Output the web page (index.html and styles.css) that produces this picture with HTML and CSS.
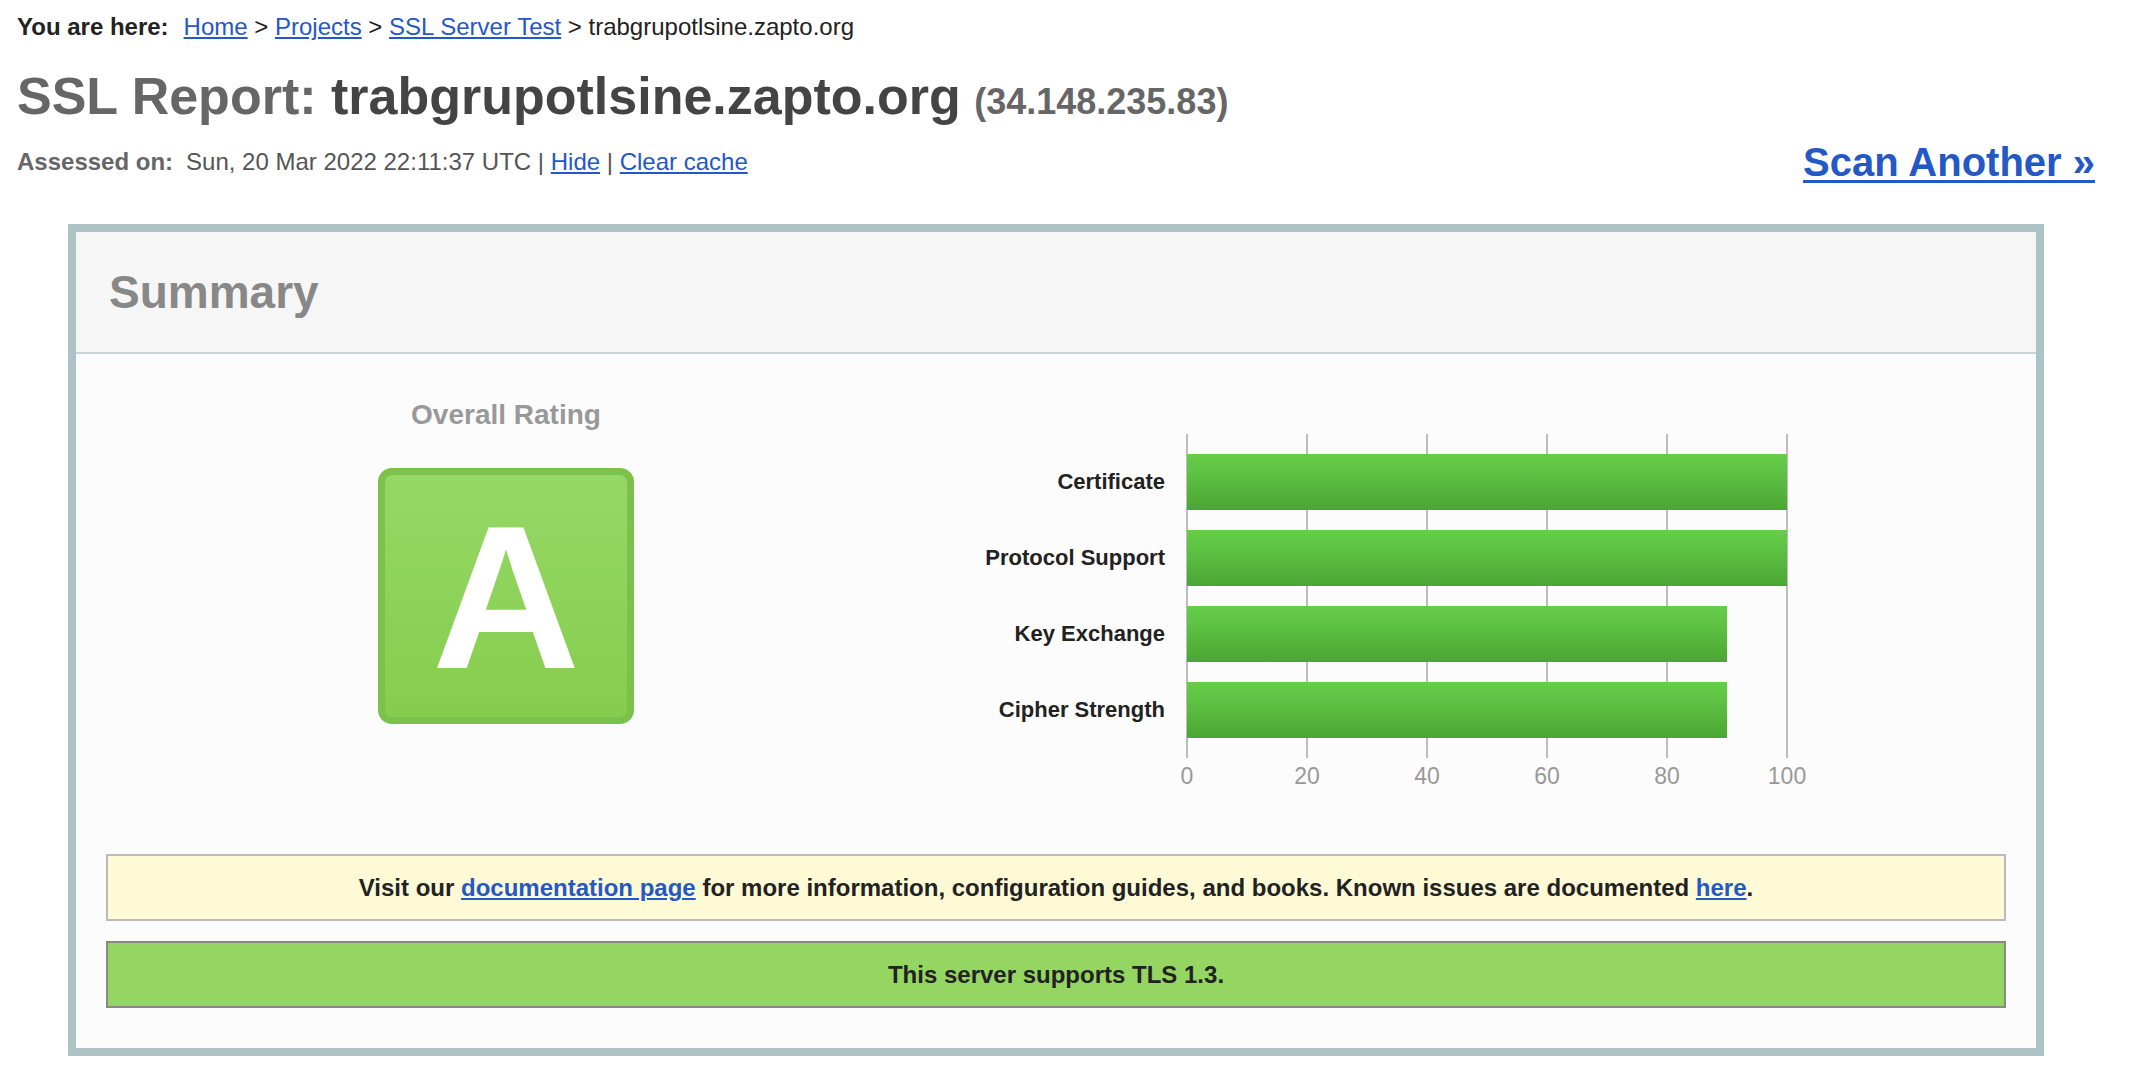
FILE: index.html
```html
<!DOCTYPE html>
<html lang="en">
<head>
<meta charset="utf-8">
<title>SSL Server Test: trabgrupotlsine.zapto.org</title>
<link rel="stylesheet" href="styles.css">
</head>
<body>
<div class="page">
  <div class="crumbs"><b class="here">You are here:</b><a href="#">Home</a> &gt; <a href="#">Projects</a> &gt; <a href="#">SSL Server Test</a> &gt; trabgrupotlsine.zapto.org</div>
  <h1 class="title"><span class="lead">SSL Report:</span> <span class="host">trabgrupotlsine.zapto.org</span> <span class="ip">(34.148.235.83)</span></h1>
  <div class="meta-row">
    <div class="assessed"><b class="assessed-label">Assessed on:</b>Sun, 20 Mar 2022 22:11:37 UTC | <a href="#">Hide</a> | <a href="#">Clear cache</a></div>
    <a class="scan" href="#">Scan Another &raquo;</a>
  </div>

  <div class="report">
    <div class="report-head">Summary</div>
    <div class="report-body">
      <div class="summary-row">
        <div class="rating">
          <div class="rating-title">Overall Rating</div>
          <div class="grade">A</div>
        </div>
        <div class="chart">
          <div class="labels">
            <div class="label">Certificate</div>
            <div class="label">Protocol Support</div>
            <div class="label">Key Exchange</div>
            <div class="label">Cipher Strength</div>
          </div>
          <div class="plot">
            <div class="bar" style="width: 600px"></div>
            <div class="bar" style="width: 600px"></div>
            <div class="bar" style="width: 540px"></div>
            <div class="bar" style="width: 540px"></div>
          </div>
          <div class="axis">
            <span>0</span><span>20</span><span>40</span><span>60</span><span>80</span><span>100</span>
          </div>
        </div>
      </div>
      <div class="notice">Visit our <a href="#">documentation page</a> for more information, configuration guides, and books. Known issues are documented <a href="#">here</a>.</div>
      <div class="good">This server supports TLS 1.3.</div>
    </div>
  </div>
</div>
</body>
</html>
```

FILE: styles.css
```css
html, body {
  margin: 0;
  padding: 0;
  background: #ffffff;
}

body {
  font-family: "Liberation Sans", Arial, Helvetica, sans-serif;
  color: #222222;
}

a {
  color: #2458c6;
  text-decoration: underline;
}

.page {
  padding: 13px 47px 0 17px;
}

.crumbs {
  font-size: 24px;
  line-height: 28px;
  color: #222222;
}

.here {
  margin-right: 15px;
}

.title {
  margin: 25px 0 0 0;
  font-size: 52px;
  line-height: 60px;
  font-weight: bold;
  white-space: nowrap;
}

.lead {
  color: #666666;
}

.host {
  color: #444444;
}

.ip {
  font-size: 36px;
  color: #666666;
  margin-left: -1px;
}

.meta-row {
  margin-top: 8px;
  display: flex;
  justify-content: space-between;
  align-items: flex-start;
}

.assessed {
  margin-top: 8px;
  font-size: 24px;
  line-height: 28px;
  color: #555555;
}

.assessed-label {
  color: #666666;
  margin-right: 13px;
}

.scan {
  font-size: 40px;
  line-height: 44px;
  font-weight: bold;
  color: #2458c6;
  text-decoration-thickness: 3px;
  text-underline-offset: 4px;
}

.report {
  margin: 40px 51px 0 51px;
  border: 8px solid #adc3c6;
  background: #fcfcfc;
}

.report-head {
  height: 120px;
  display: flex;
  align-items: center;
  padding-left: 33px;
  background: #f6f6f6;
  border-bottom: 2px solid #c8d6d6;
  font-size: 46px;
  line-height: 1;
  font-weight: bold;
  color: #888888;
}

.report-body {
  padding: 0 30px 40px 30px;
}

.summary-row {
  display: flex;
  align-items: flex-start;
}

.rating {
  width: 800px;
  padding-top: 45px;
  display: flex;
  flex-direction: column;
  align-items: center;
}

.rating-title {
  font-size: 28px;
  line-height: 32px;
  font-weight: bold;
  color: #999999;
}

.grade {
  margin-top: 37px;
  width: 242px;
  height: 242px;
  border: 7px solid #7bc24a;
  border-radius: 14px;
  background: linear-gradient(#96d866, #85cd4e);
  display: flex;
  align-items: center;
  justify-content: center;
  font-size: 205px;
  line-height: 1;
  font-weight: bold;
  color: #ffffff;
}

.chart {
  padding-top: 80px;
  display: grid;
  grid-template-columns: 259px 602px;
  column-gap: 21px;
}

.labels {
  padding: 20px 0;
  display: flex;
  flex-direction: column;
  gap: 20px;
}

.label {
  height: 56px;
  display: flex;
  align-items: center;
  justify-content: flex-end;
  font-size: 22px;
  font-weight: bold;
  color: #222222;
}

.plot {
  padding: 20px 0;
  display: flex;
  flex-direction: column;
  gap: 20px;
  background-image: repeating-linear-gradient(to right, #bdbdbd 0, #bdbdbd 2px, transparent 2px, transparent 120px);
}

.bar {
  height: 56px;
  margin-left: 1px;
  background: linear-gradient(#66ce4a, #59bb3f 50%, #4aa633);
}

.axis {
  grid-column: 2;
  margin-top: 5px;
  margin-left: -59px;
  width: 720px;
  display: grid;
  grid-template-columns: repeat(6, 120px);
  font-size: 23px;
  line-height: 26px;
  color: #999999;
  text-align: center;
}

.notice {
  margin-top: 65px;
  border: 2px solid #bbbbbb;
  background: #fefad5;
  padding: 18px 10px;
  text-align: center;
  font-size: 24px;
  line-height: 27px;
  font-weight: bold;
  color: #222222;
}

.good {
  margin-top: 20px;
  border: 2px solid #888888;
  background: #95d662;
  padding: 18px 10px;
  text-align: center;
  font-size: 24px;
  line-height: 27px;
  font-weight: bold;
  color: #222222;
}
```
